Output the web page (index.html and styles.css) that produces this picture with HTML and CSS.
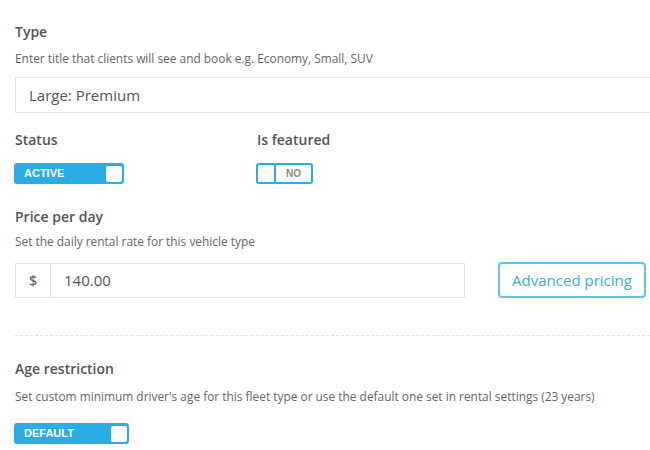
FILE: index.html
```html
<!DOCTYPE html>
<html lang="en">
<head>
  <meta charset="UTF-8">
  <meta name="viewport" content="width=device-width, initial-scale=1.0">
  <title>Fleet type</title>
  <link rel="stylesheet" href="styles.css">
</head>
<body>
  <div class="form">
    <div class="field field-type">
      <h3 class="label">Type</h3>
      <p class="hint">Enter title that clients will see and book e.g. Economy, Small, SUV</p>
      <div class="input">Large: Premium</div>
    </div>

    <div class="field-row">
      <div class="field field-status">
        <h3 class="label">Status</h3>
        <div class="toggle on toggle-active">
          <span class="toggle-text">ACTIVE</span>
          <span class="knob"></span>
        </div>
      </div>
      <div class="field field-featured">
        <h3 class="label">Is featured</h3>
        <div class="toggle off">
          <span class="knob"></span>
          <span class="toggle-text">NO</span>
        </div>
      </div>
    </div>

    <div class="field field-price">
      <h3 class="label">Price per day</h3>
      <p class="hint">Set the daily rental rate for this vehicle type</p>
      <div class="price-row">
        <div class="input-group">
          <span class="addon">$</span>
          <span class="value">140.00</span>
        </div>
        <button class="btn-outline">Advanced pricing</button>
      </div>
    </div>

    <hr class="divider">

    <div class="field field-age">
      <h3 class="label">Age restriction</h3>
      <p class="hint">Set custom minimum driver's age for this fleet type or use the default one set in rental settings (23 years)</p>
      <div class="toggle on toggle-default">
        <span class="toggle-text">DEFAULT</span>
        <span class="knob"></span>
      </div>
    </div>
  </div>
</body>
</html>
```

FILE: styles.css
```css
body {
  margin: 0;
  background-color: #fff;
  font-family: "Open Sans", Arial, sans-serif;
  color: #555;
  overflow: hidden;
}
.form {
  width: 650px;
  padding: 22px 0 0 15px;
}
.label {
  margin: 0;
  font-size: 14px;
  line-height: 20px;
  font-weight: 600;
  color: #555;
}
.hint {
  margin: 8px 0 0;
  font-size: 11.9px;
  line-height: 16px;
  color: #666;
}
.input {
  margin-top: 11px;
  height: 34px;
  border: 1px solid #e3e3e3;
  padding: 0 13px;
  font-size: 15px;
  line-height: 34px;
  color: #555;
}
.field-row {
  display: flex;
  margin-top: 17px;
}
.field-status {
  width: 242px;
}
.toggle {
  display: flex;
  box-sizing: border-box;
  height: 21px;
  margin-top: 13px;
  border: 2px solid #2aade4;
  border-radius: 3px;
  font-family: "Liberation Sans", Arial, sans-serif;
  font-weight: bold;
  font-size: 11px;
  line-height: 17px;
  margin-left: -1px;
}
.toggle.on {
  background-color: #2aade4;
  color: #fff;
}
.toggle.on .toggle-text {
  flex: 1;
  padding-left: 8px;
}
.toggle.on .knob {
  width: 16px;
  height: 16px;
  background-color: #fff;
  border-radius: 2px;
  align-self: flex-end;
}
.toggle-active {
  width: 110px;
}
.toggle-default {
  width: 115px;
  margin-top: 19px;
}
.toggle.off {
  width: 57px;
  background-color: #fff;
  color: #8a8a8a;
  font-size: 10px;
}
.toggle.off .knob {
  width: 16px;
  border-right: 2px solid #2aade4;
}
.toggle.off .toggle-text {
  flex: 1;
  text-align: center;
}
.field-price {
  margin-top: 23px;
}
.field-price .hint {
  margin-top: 6px;
}
.price-row {
  display: flex;
  margin-top: 14px;
}
.input-group {
  display: flex;
  width: 450px;
  height: 35px;
  box-sizing: border-box;
  border: 1px solid #e3e3e3;
  font-size: 15px;
  line-height: 33px;
}
.addon {
  width: 34px;
  border-right: 1px solid #e3e3e3;
  text-align: center;
  font-size: 14px;
  font-weight: 600;
  color: #666;
}
.value {
  padding-left: 13px;
  color: #555;
}
.btn-outline {
  margin-left: 33px;
  width: 148px;
  height: 36px;
  margin-top: -1px;
  background-color: #fff;
  border: 2px solid #5ec5ef;
  border-radius: 4px;
  font-family: "Open Sans", Arial, sans-serif;
  font-size: 15px;
  color: #3aaee2;
  padding: 0;
}
.divider {
  margin: 37px 0 0;
  border: none;
  border-top: 1px dashed #e2e2e2;
}
.field-age {
  margin-top: 23px;
}
.field-age .hint {
  margin-top: 9px;
}
```
